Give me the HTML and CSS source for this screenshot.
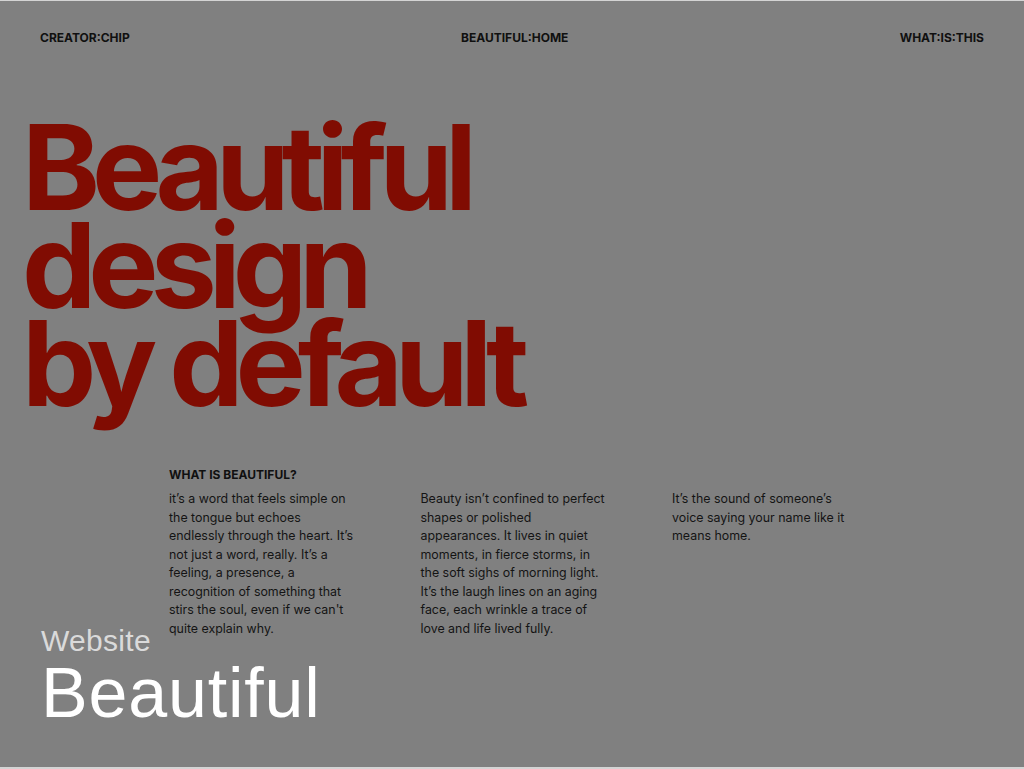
FILE: index.html
```html
<!DOCTYPE html>
<html lang="en">
<head>
<meta charset="utf-8">
<title>Beautiful design by default</title>
<link rel="stylesheet" href="styles.css">
</head>
<body>
<div class="frame">
  <header class="nav">
    <span class="nav-item">CREATOR:CHIP</span>
    <span class="nav-item">BEAUTIFUL:HOME</span>
    <span class="nav-item">WHAT:IS:THIS</span>
  </header>
  <h1 class="hero">Beautiful<br>design<br>by default</h1>
  <section class="about">
    <h2 class="about-title">WHAT IS BEAUTIFUL?</h2>
    <div class="cols">
      <p class="col">it’s a word that feels simple on the tongue but echoes endlessly through the heart. It’s not just a word, really. It’s a feeling, a presence, a recognition of something that stirs the soul, even if we can't quite explain why.</p>
      <p class="col">Beauty isn’t confined to perfect shapes or polished appearances. It lives in quiet moments, in fierce storms, in the soft sighs of morning light. It’s the laugh lines on an aging face, each wrinkle a trace of love and life lived fully.</p>
      <p class="col">It’s the sound of someone’s voice saying your name like it means home.</p>
    </div>
  </section>
  <div class="label">
    <div class="label-sub">Website</div>
    <div class="label-main">Beautiful</div>
  </div>
</div>
</body>
</html>
```

FILE: styles.css
```css
html, body {
  margin: 0;
  padding: 0;
}
body {
  background: #d4d4d4;
  font-family: "Inter", "Liberation Sans", sans-serif;
}
.frame {
  position: relative;
  margin-top: 1px;
  height: 766px;
  background: #808080;
  overflow: hidden;
}
.nav {
  display: flex;
  justify-content: space-between;
  align-items: center;
  padding: 29px 40px 0 40px;
  height: 16px;
}
.nav-item {
  font-size: 12px;
  font-weight: 700;
  color: #101010;
  line-height: 16px;
}
.hero {
  margin: 0;
  padding: 72px 0 0 22px;
  font-size: 118px;
  line-height: 98px;
  font-weight: 700;
  letter-spacing: -0.068em;
  color: #800c02;
}
.about {
  padding: 56px 0 0 169px;
}
.about-title {
  margin: 0 0 8px 0;
  font-size: 12px;
  font-weight: 700;
  color: #101010;
  line-height: 14px;
}
.cols {
  display: grid;
  grid-template-columns: repeat(3, 251.5px);
}
.col {
  margin: 0;
  max-width: 186px;
  font-size: 12.4px;
  line-height: 18.5px;
  color: #141414;
}
.label {
  position: absolute;
  left: 41px;
  top: 623px;
  font-family: "Liberation Sans", Arial, sans-serif;
}
.label-sub {
  font-size: 30px;
  line-height: 34px;
  letter-spacing: 0.3px;
  color: #dadada;
}
.label-main {
  font-size: 70px;
  line-height: 70px;
  letter-spacing: 0.8px;
  color: #ffffff;
}
```
